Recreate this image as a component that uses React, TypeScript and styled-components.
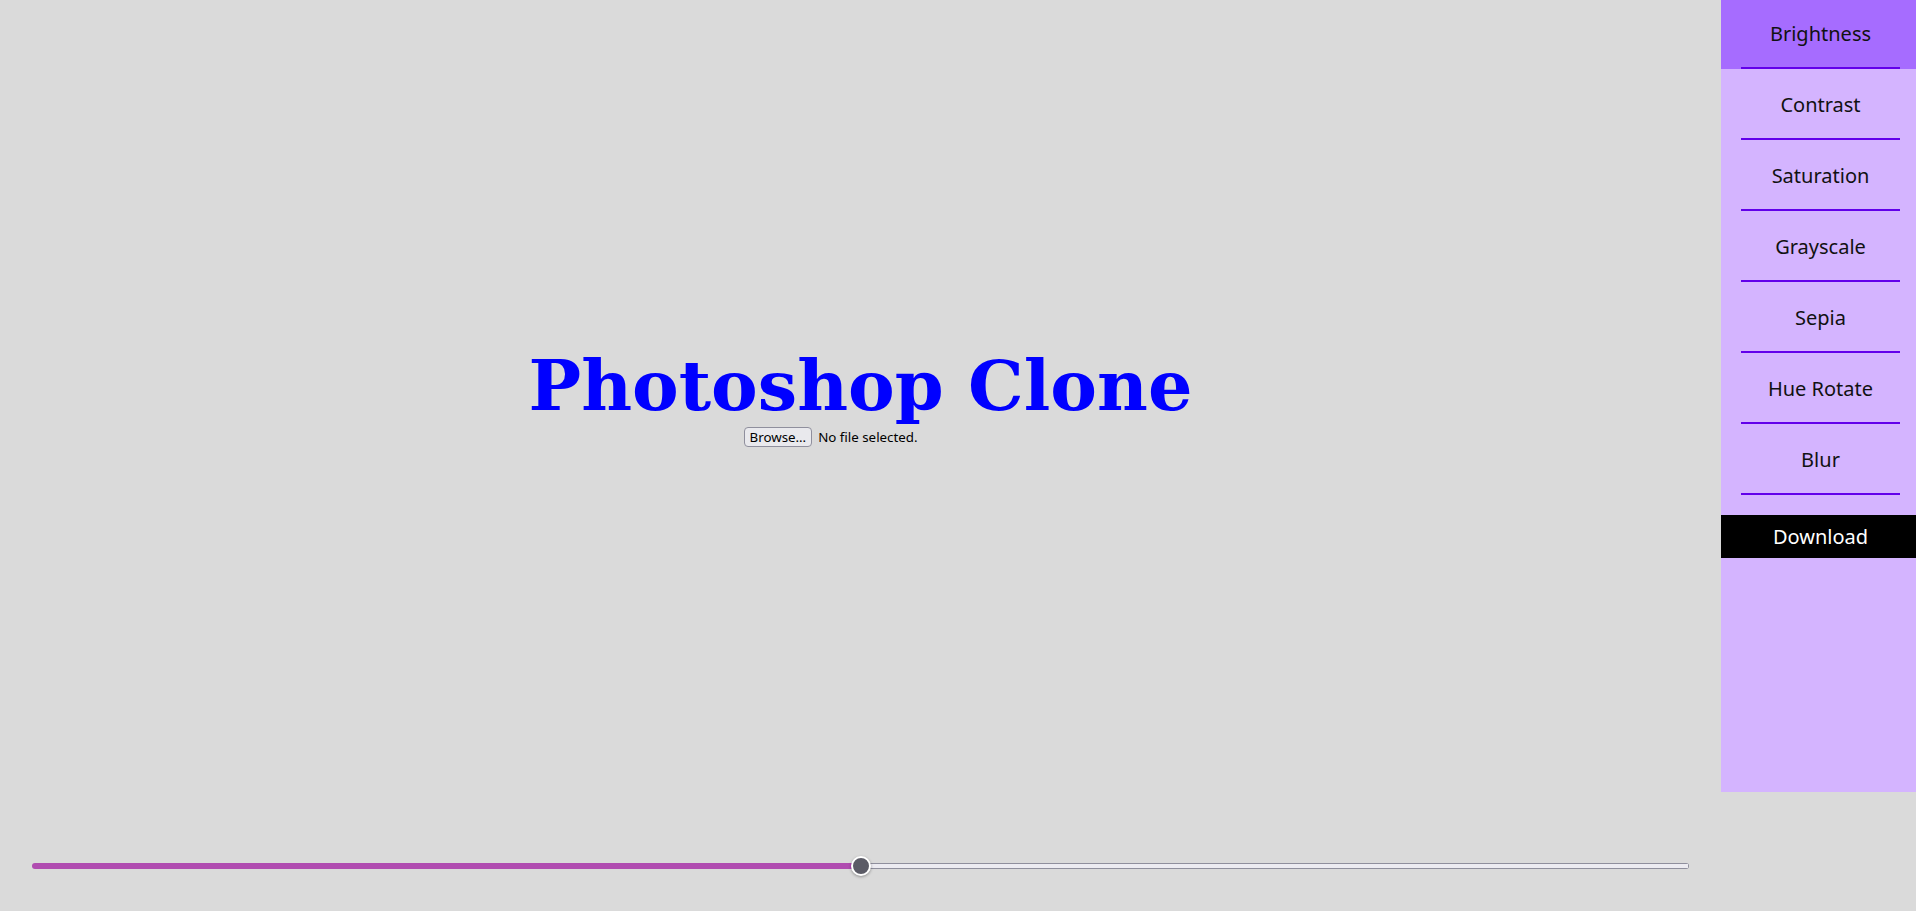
import { useState } from "react";
import styled, { createGlobalStyle } from "styled-components";

const GlobalStyle = createGlobalStyle`
  html, body {
    margin: 0;
    padding: 0;
    background: #dadada;
    font-family: "Noto Sans", "Open Sans", sans-serif;
  }
  * {
    box-sizing: border-box;
  }
`;

const Container = styled.div`
  display: grid;
  grid-template-columns: 1fr 195px;
  grid-template-rows: 792px 1fr;
  height: 100vh;
  background: #dadada;
`;

const Main = styled.main`
  display: flex;
  flex-direction: column;
  align-items: center;
  justify-content: center;
`;

const Title = styled.h1`
  margin: 0;
  color: #0000ff;
  font-family: "DejaVu Serif", serif;
  font-weight: bold;
  font-size: 70px;
  line-height: 1.16;
`;

const FilePicker = styled.label`
  display: flex;
  align-items: center;
  gap: 6px;
  width: 234px;
  font-size: 13.33px;
  color: #000;
  cursor: pointer;

  input {
    display: none;
  }
`;

const BrowseButton = styled.span`
  display: inline-flex;
  align-items: center;
  height: 20px;
  padding: 0 5px;
  background: #e9e9ed;
  border: 1px solid #8f8f9d;
  border-radius: 4px;
`;

const Sidebar = styled.aside`
  grid-row: 1;
  grid-column: 2;
  display: flex;
  flex-direction: column;
  gap: 2px;
  background: #d4b4ff;
`;

const SidebarItem = styled.button<{ $active: boolean }>`
  position: relative;
  height: 69px;
  padding: 0 0 2px 4px;
  border: none;
  background: ${(p) => (p.$active ? "#a66cff" : "transparent")};
  color: #111;
  font-family: "Noto Sans", sans-serif;
  font-size: 20px;
  cursor: pointer;

  &::after {
    content: "";
    position: absolute;
    left: 20px;
    right: 16px;
    bottom: 0;
    height: 2px;
    background: #6200ea;
  }
`;

const DownloadButton = styled.button`
  height: 43px;
  margin-top: 18px;
  padding: 0 0 0 4px;
  border: none;
  background: #000;
  color: #fff;
  font-family: "Noto Sans", sans-serif;
  font-size: 20px;
  cursor: pointer;
`;

const SliderWrap = styled.div`
  grid-row: 2;
  grid-column: 1;
  display: flex;
  align-items: center;
  padding: 44px 32px 15px;
`;

const Slider = styled.input<{ $fill: number }>`
  -webkit-appearance: none;
  appearance: none;
  width: 100%;
  height: 20px;
  margin: 0;
  background: transparent;

  &::-webkit-slider-runnable-track {
    height: 6px;
    border-radius: 3px;
    background-color: #8f8f9d;
    background-image:
      linear-gradient(
        to right,
        #b04cb0 ${(p) => p.$fill}%,
        transparent ${(p) => p.$fill}%
      ),
      linear-gradient(#ecebf1, #ecebf1);
    background-repeat: no-repeat;
    background-size: 100% 100%, calc(100% - 2px) 4px;
    background-position: 0 0, center;
  }

  &::-webkit-slider-thumb {
    -webkit-appearance: none;
    width: 20px;
    height: 20px;
    margin-top: -7px;
    border-radius: 50%;
    background: #5b5b66;
    border: 2px solid #fff;
    box-shadow: 0 1px 3px rgba(0, 0, 0, 0.35);
  }
`;

const OPTIONS = [
  { name: "Brightness", value: 100, min: 0, max: 200 },
  { name: "Contrast", value: 100, min: 0, max: 200 },
  { name: "Saturation", value: 100, min: 0, max: 200 },
  { name: "Grayscale", value: 0, min: 0, max: 100 },
  { name: "Sepia", value: 0, min: 0, max: 100 },
  { name: "Hue Rotate", value: 0, min: 0, max: 360 },
  { name: "Blur", value: 0, min: 0, max: 20 },
];

const App = () => {
  const [options, setOptions] = useState(OPTIONS);
  const [selected, setSelected] = useState(0);
  const [fileName, setFileName] = useState<string | null>(null);
  const current = options[selected];
  const fill = ((current.value - current.min) / (current.max - current.min)) * 100;

  const handleSlider = (e: React.ChangeEvent<HTMLInputElement>) => {
    const value = Number(e.target.value);
    setOptions((prev) =>
      prev.map((opt, i) => (i === selected ? { ...opt, value } : opt))
    );
  };

  return (
    <>
      <GlobalStyle />
      <Container>
        <Main>
          <Title>Photoshop Clone</Title>
          <FilePicker>
            <input
              type="file"
              onChange={(e) => setFileName(e.target.files?.[0]?.name ?? null)}
            />
            <BrowseButton>Browse…</BrowseButton>
            <span>{fileName ?? "No file selected."}</span>
          </FilePicker>
        </Main>

        <Sidebar>
          {options.map((opt, i) => (
            <SidebarItem
              key={opt.name}
              $active={i === selected}
              onClick={() => setSelected(i)}
            >
              {opt.name}
            </SidebarItem>
          ))}
          <DownloadButton>Download</DownloadButton>
        </Sidebar>

        <SliderWrap>
          <Slider
            type="range"
            min={current.min}
            max={current.max}
            value={current.value}
            $fill={fill}
            onChange={handleSlider}
          />
        </SliderWrap>
      </Container>
    </>
  );
};

export default App;
